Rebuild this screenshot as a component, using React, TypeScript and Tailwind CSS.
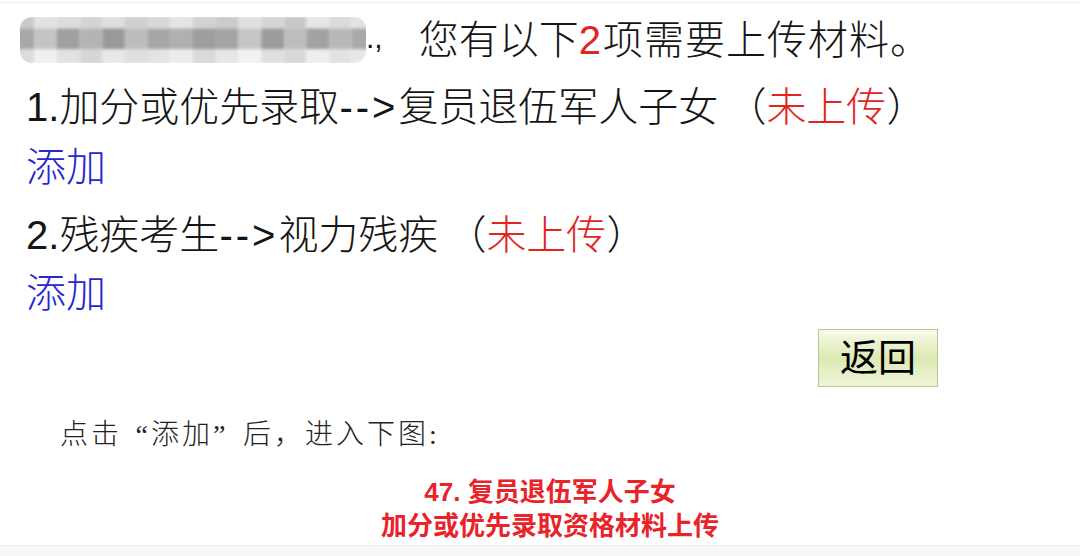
const CJK = { fontFamily: '"Liberation Sans", "Noto Sans CJK SC", sans-serif' }

// 打码的姓名区域：灰色马赛克块（三行）
const ROWS: { h: string; tiles: string[] }[] = [
  { h: 'h-[12px]', tiles: ['#c9c9c9', '#e2e2e2', '#dcdcdc', '#d4d4d4', '#dedede', '#cfcfcf', '#d8d8d8', '#e4e4e4', '#d2d2d2', '#cbcbcb', '#e0e0e0', '#d6d6d6', '#c8c8c8', '#e6e6e6', '#dadada', '#e2e2e2'] },
  { h: 'h-[20px]', tiles: ['#a8a8a8', '#c4c4c4', '#a0a0a0', '#b4b4b4', '#999999', '#bcbcbc', '#a6a6a6', '#b0b0b0', '#9e9e9e', '#a4a4a4', '#c6c6c6', '#9c9c9c', '#bdbdbd', '#a2a2a2', '#b8b8b8', '#a9a9a9'] },
  { h: 'h-[14px]', tiles: ['#dcdcdc', '#f0f0f0', '#e2e2e2', '#d6d6d6', '#e8e8e8', '#dedede', '#e4e4e4', '#ececec', '#dadada', '#e6e6e6', '#f2f2f2', '#e0e0e0', '#d8d8d8', '#eeeeee', '#e2e2e2', '#e8e8e8'] },
]

function Mosaic() {
  return (
    <div className="w-[346px] h-[46px] rounded-[12px] overflow-hidden shrink-0">
      <div className="flex flex-col blur-[1.5px] scale-105">
        {ROWS.map((r, ri) => (
          <div key={ri} className="flex">
            {r.tiles.map((c, i) => (
              <div key={i} className={`w-[22px] ${r.h}`} style={{ background: c }} />
            ))}
          </div>
        ))}
      </div>
    </div>
  )
}

function Item({ no, path, last }: { no: string; path: string; last: string }) {
  return (
    <div className="h-[60px] flex items-center pl-[26px] text-[40px] font-light text-[#151515] whitespace-nowrap [text-spacing-trim:space-all]">
      {no}.{path}<span className="tracking-[3px]">--&gt;</span>{last}
      <span className="ml-[8px]">（</span>
      <span className="text-[#e2251f]">未上传</span>
      <span>）</span>
    </div>
  )
}

function AddLink({ h }: { h: string }) {
  return (
    <div className={`${h} flex items-center pl-[26px] text-[40px] font-light text-[#2626d4]`}>添加</div>
  )
}

export default function App() {
  return (
    <div className="w-[1080px] h-[556px] bg-white flex flex-col overflow-hidden" style={CJK}>
      <div className="h-[3px] border-b border-[#ececec]" />
      <div className="pt-[7px]">
        <div className="h-[60px] flex items-center pl-[20px] text-[40px] font-light text-[#151515] whitespace-nowrap [text-spacing-trim:space-all]">
          <Mosaic />
          <span className="text-[30px] self-end mb-[10px]">.,</span>
          <span className="ml-[36px]">
            您有以下<span className="text-[#e2251f] font-normal">2</span>
            <span className="ml-[2px] tracking-[1px]">项需要上传材料。</span>
          </span>
        </div>
        <div className="mt-[7px]">
          <Item no="1" path="加分或优先录取" last="复员退伍军人子女" />
          <AddLink h="h-[60px]" />
        </div>
        <div className="mt-[8px]">
          <Item no="2" path="残疾考生" last="视力残疾" />
          <AddLink h="h-[56px]" />
        </div>
        <div className="mt-[8px] flex justify-end pr-[142px]">
          <button
            type="button"
            className="w-[120px] h-[58px] border border-[#b7ca8c] bg-gradient-to-b from-[#f7fbec] via-[#dde9b2] to-[#eef5d8] text-[38px] text-black flex items-center justify-center"
          >
            返回
          </button>
        </div>
        <div
          className="mt-[28px] pl-[60px] h-[40px] flex items-center text-[28px] font-light tracking-[3px] text-[#222] whitespace-nowrap [text-spacing-trim:space-all]"
          style={{ fontFamily: '"Liberation Serif", "Noto Sans CJK SC", serif' }}
        >
          点击<span className="inline-block w-[29px] text-right">“</span>添加
          <span className="inline-block w-[30px] text-left">”</span>后，进入下图:
        </div>
        <div className="mt-[20px] pl-[20px] text-center text-[26px] font-bold leading-[34px] text-[#e8232a]">
          <div>47. 复员退伍军人子女</div>
          <div>加分或优先录取资格材料上传</div>
        </div>
      </div>
      <div className="mt-auto h-[11px] bg-[#f6f6f6] border-t border-[#eeeeee]" />
    </div>
  )
}
